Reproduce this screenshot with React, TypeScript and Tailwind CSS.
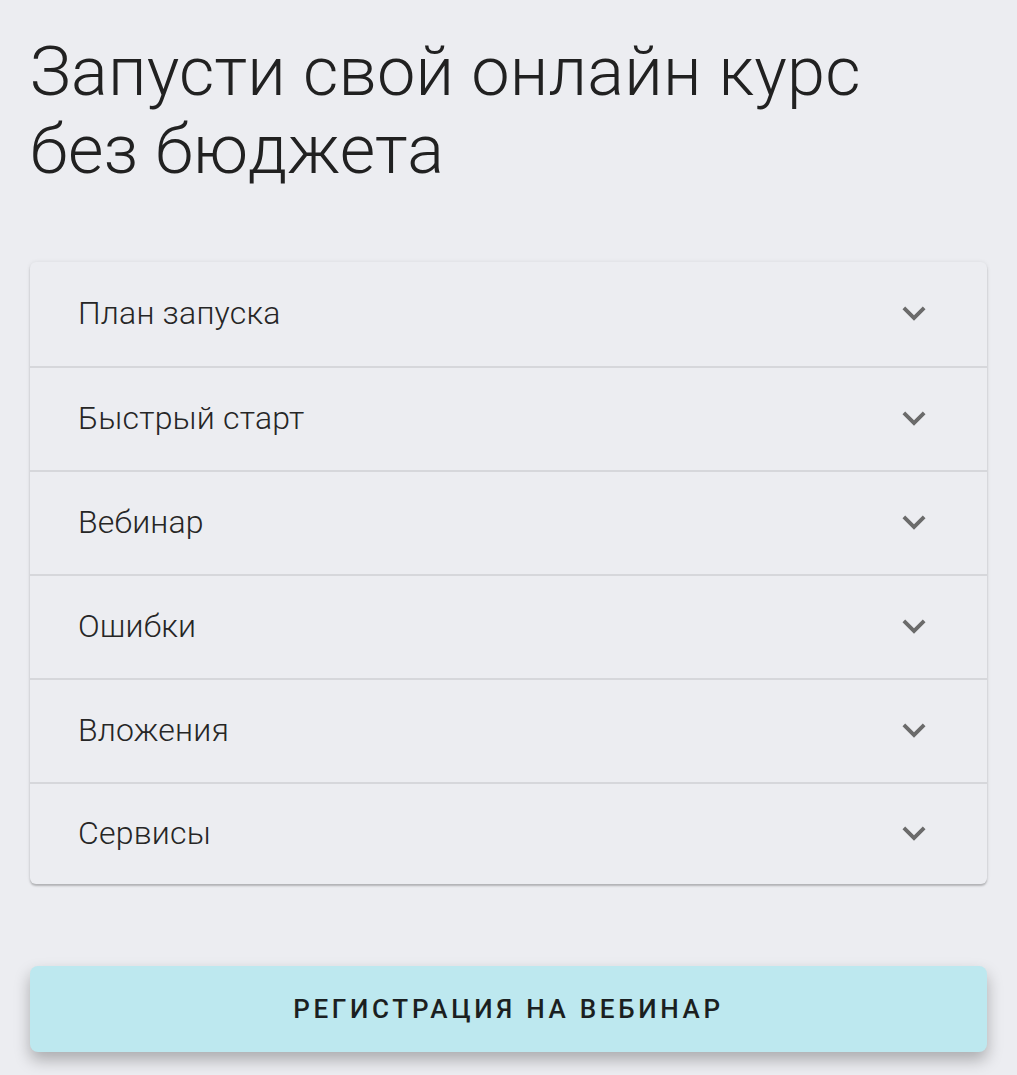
import React from "react";

const ITEMS = ["План запуска", "Быстрый старт", "Вебинар", "Ошибки", "Вложения", "Сервисы"];

function ExpandMore() {
  return (
    <svg viewBox="0 0 24 24" className="h-[46px] w-[46px] fill-[#6b6b6b]">
      <path d="M16.59 8.59L12 13.17 7.41 8.59 6 10l6 6 6-6z" />
    </svg>
  );
}

export default function App() {
  return (
    <div className="min-h-[1075px] bg-[#ecedf1] px-[30px] pt-[33px] pb-[22px] font-['Roboto',sans-serif] text-[#212121]">
      <h1 className="text-[68.5px] font-light leading-[78px] tracking-[0.2px]">
        Запусти свой онлайн курс
        <br />
        без бюджета
      </h1>

      <div className="mt-[73px] overflow-hidden rounded-[6px] bg-[#ecedf1] shadow-[0_2px_2px_rgba(0,0,0,0.22),0_0_4px_rgba(0,0,0,0.08)]">
        {ITEMS.map((item, i) => (
          <div
            key={item}
            className={
              "flex items-center justify-between pb-[3px] pl-[48px] pr-[50px] " +
              (i > 0 ? "border-t-2 border-[#d6d7db] " : "") +
              (i === ITEMS.length - 1 ? "h-[102px]" : "h-[104px]")
            }
          >
            <span className="text-[32px] font-light tracking-[0.2px] text-[#262626]">{item}</span>
            <ExpandMore />
          </div>
        ))}
      </div>

      <button className="mt-[82px] flex h-[86px] w-full items-center justify-center rounded-[8px] bg-[#bde8ef] text-[26px] font-medium tracking-[3.7px] text-[#1b1f21] shadow-[0_8px_16px_rgba(0,0,0,0.28)]">
        РЕГИСТРАЦИЯ НА ВЕБИНАР
      </button>
    </div>
  );
}
